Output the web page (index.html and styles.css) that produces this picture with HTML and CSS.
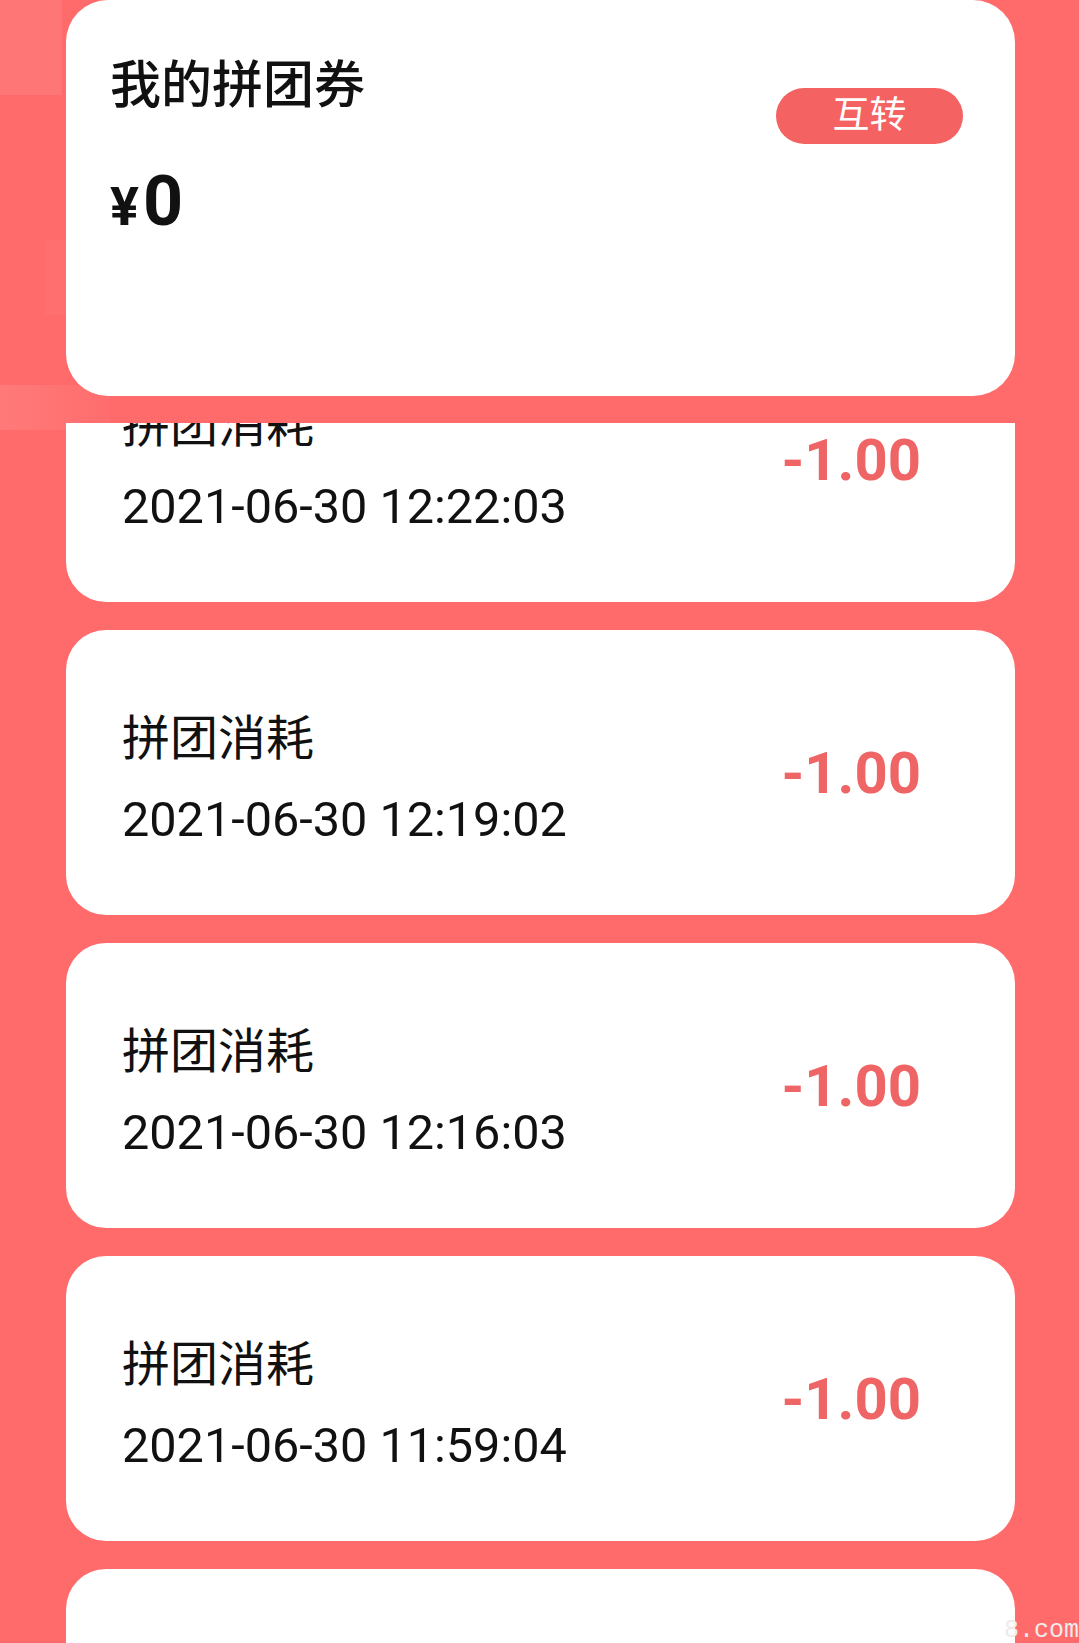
FILE: index.html
```html
<!DOCTYPE html>
<html lang="zh-CN">
<head>
    <meta charset="UTF-8">
    <meta name="viewport" content="width=device-width, initial-scale=1.0">
    <title>我的拼团券</title>
    <link rel="stylesheet" href="styles.css">
</head>

<body>

    <div class="page">
        <section class="summary">
            <div class="summary-info">
                <h2 class="summary-title">我的拼团券</h2>
                <p class="summary-amount"><span class="currency">¥</span>0</p>
            </div>
            <button class="transfer-btn" type="button">互转</button>
        </section>

        <div class="record-list">
            <ul class="records">
                <li class="record">
                    <div class="record-info">
                        <p class="record-title">拼团消耗</p>
                        <p class="record-time">2021-06-30 12:22:03</p>
                    </div>
                    <span class="record-amount">-1.00</span>
                </li>
                <li class="record">
                    <div class="record-info">
                        <p class="record-title">拼团消耗</p>
                        <p class="record-time">2021-06-30 12:19:02</p>
                    </div>
                    <span class="record-amount">-1.00</span>
                </li>
                <li class="record">
                    <div class="record-info">
                        <p class="record-title">拼团消耗</p>
                        <p class="record-time">2021-06-30 12:16:03</p>
                    </div>
                    <span class="record-amount">-1.00</span>
                </li>
                <li class="record">
                    <div class="record-info">
                        <p class="record-title">拼团消耗</p>
                        <p class="record-time">2021-06-30 11:59:04</p>
                    </div>
                    <span class="record-amount">-1.00</span>
                </li>
                <li class="record">
                    <div class="record-info">
                        <p class="record-title">拼团消耗</p>
                        <p class="record-time">2021-06-30 11:52:01</p>
                    </div>
                    <span class="record-amount">-1.00</span>
                </li>
            </ul>
        </div>
    </div>

    <span class="watermark">8.com</span>

</body>
</html>
```

FILE: styles.css
```css
* {
    margin: 0;
    padding: 0;
    box-sizing: border-box;
}

html, body {
    height: 100%;
    overflow: hidden;
}

body {
    position: relative;
    font-family: Roboto, "Noto Sans CJK SC", sans-serif;
    color: #111;
    background:
        linear-gradient(#ff7676, #ff7676) 0 0 / 62px 95px no-repeat,
        linear-gradient(#ff6f6f, #ff6f6f) 45px 240px / 50px 75px no-repeat,
        linear-gradient(to right, #ff7a7a, #ff6d6d) 0 385px / 110px 45px no-repeat,
        #ff6b6b;
}

.page {
    display: flex;
    flex-direction: column;
    height: 100%;
    padding: 0 64px 0 66px;
}

/* top summary card */
.summary {
    display: flex;
    justify-content: space-between;
    align-items: flex-start;
    flex-shrink: 0;
    height: 396px;
    padding: 60px 52px 0 44px;
    background-color: #fff;
    border-radius: 42px;
}

.summary-title {
    font-size: 51px;
    font-weight: 500;
    line-height: 1;
}

.summary-amount {
    margin-top: 55px;
    font-size: 70px;
    font-weight: 700;
    line-height: 1;
}

.currency {
    font-size: 54px;
    margin-right: 4px;
}

.transfer-btn {
    margin-top: 28px;
    width: 187px;
    height: 56px;
    border: none;
    border-radius: 28px;
    background-color: #f46262;
    color: #fff;
    font-family: inherit;
    font-size: 37px;
    line-height: 56px;
    cursor: pointer;
}

/* record list (scrolled) */
.record-list {
    flex: 1;
    margin-top: 27px;
    overflow: hidden;
}

.records {
    list-style: none;
    display: flex;
    flex-direction: column;
    gap: 28px;
    margin-top: -106px;
}

.record {
    display: flex;
    justify-content: space-between;
    align-items: center;
    flex-shrink: 0;
    height: 285px;
    padding: 0 94px 0 56px;
    background-color: #fff;
    border-radius: 40px;
}

.record-info {
    display: flex;
    flex-direction: column;
    gap: 33px;
    margin-top: 14px;
}

.record-title {
    font-size: 48px;
    line-height: 1;
}

.record-time {
    font-size: 48.6px;
    line-height: 1;
}

.record-amount {
    font-size: 58px;
    font-weight: 700;
    line-height: 1;
    color: #ef6565;
}

.watermark {
    position: absolute;
    right: 0;
    bottom: 0;
    font-family: "Liberation Mono", monospace;
    font-size: 25px;
    line-height: 1;
    color: #f0eaea;
}
```
